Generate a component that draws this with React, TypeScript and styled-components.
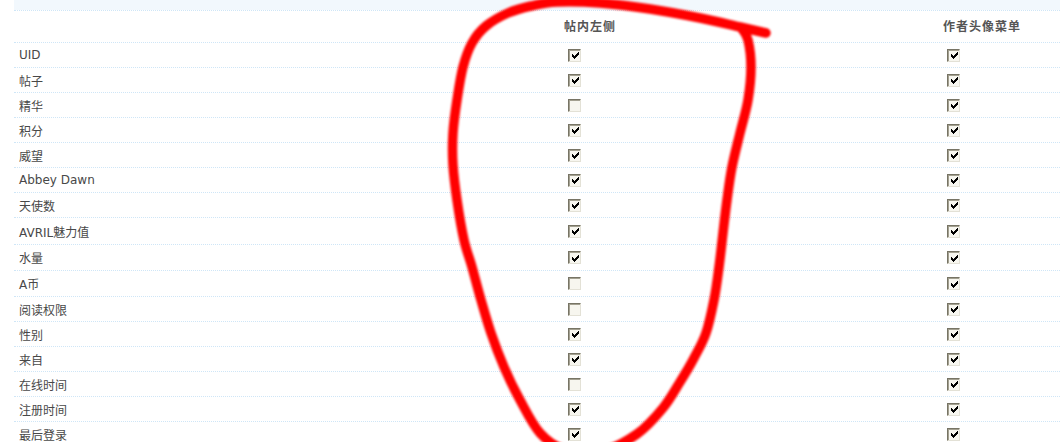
import React from "react";
import styled, { createGlobalStyle } from "styled-components";

type FieldRow = {
  label: string;
  side: boolean;
  menu: boolean;
  height?: number;
};

const fields: FieldRow[] = [
  { label: "UID", side: true, menu: true },
  { label: "帖子", side: true, menu: true },
  { label: "精华", side: false, menu: true },
  { label: "积分", side: true, menu: true },
  { label: "威望", side: true, menu: true },
  { label: "Abbey Dawn", side: true, menu: true },
  { label: "天使数", side: true, menu: true },
  { label: "AVRIL魅力值", side: true, menu: true, height: 27 },
  { label: "水量", side: true, menu: true, height: 26 },
  { label: "A币", side: false, menu: true, height: 26 },
  { label: "阅读权限", side: false, menu: true },
  { label: "性别", side: true, menu: true },
  { label: "来自", side: true, menu: true },
  { label: "在线时间", side: false, menu: true },
  { label: "注册时间", side: true, menu: true },
  { label: "最后登录", side: true, menu: true },
];

// the red marker loop drawn over the screenshot
const loop: [number, number][] = [
  [766, 33], [740, 27], [700, 18], [650, 9], [600, 3], [557, 2], [531, 6],
  [508, 13], [486, 26], [472, 43], [463, 67], [457, 100], [453, 133],
  [453, 165], [457, 200], [464, 240], [472, 267], [481, 300], [491, 333],
  [504, 367], [520, 400], [540, 433], [565, 450], [600, 452], [637, 434],
  [663, 408], [680, 382], [694, 358], [706, 333], [714, 300], [719, 267],
  [723, 233], [727, 200], [732, 167], [740, 133], [748, 100], [751, 67],
  [748, 40], [742, 29],
];

const smoothPath = (pts: [number, number][]) => {
  let d = `M${pts[0][0]} ${pts[0][1]}`;
  for (let i = 0; i < pts.length - 1; i++) {
    const p0 = pts[i - 1] || pts[i];
    const p1 = pts[i];
    const p2 = pts[i + 1];
    const p3 = pts[i + 2] || p2;
    const c1x = p1[0] + (p2[0] - p0[0]) / 6;
    const c1y = p1[1] + (p2[1] - p0[1]) / 6;
    const c2x = p2[0] - (p3[0] - p1[0]) / 6;
    const c2y = p2[1] - (p3[1] - p1[1]) / 6;
    d += ` C${c1x.toFixed(1)} ${c1y.toFixed(1)} ${c2x.toFixed(1)} ${c2y.toFixed(1)} ${p2[0]} ${p2[1]}`;
  }
  return d;
};

const loopPath = smoothPath(loop);

const CheckBox = ({ checked }: { checked: boolean }) => (
  <Box role="checkbox" aria-checked={checked}>
    {checked && (
      <svg width="7" height="7" viewBox="0 0 7 7" shapeRendering="crispEdges">
        <polygon points="0,2 2,4 7,0 7,3 2,7 0,5" fill="#000" />
      </svg>
    )}
  </Box>
);

const App: React.FC = () => {
  return (
    <Page>
      <GlobalStyle />
      <Table>
        <Band />
        <HeaderRow>
          <HeadCell />
          <HeadCell>帖内左侧</HeadCell>
          <HeadCell>作者头像菜单</HeadCell>
        </HeaderRow>
        {fields.map((f) => (
          <Row key={f.label} $height={f.height ?? 25}>
            <LabelCell>{f.label}</LabelCell>
            <Cell>
              <CheckBox checked={f.side} />
            </Cell>
            <Cell>
              <CheckBox checked={f.menu} />
            </Cell>
          </Row>
        ))}
      </Table>
      <Scribble width="1060" height="442" viewBox="0 0 1060 442">
        <defs>
          <filter id="soft" x="-5%" y="-5%" width="110%" height="110%">
            <feGaussianBlur stdDeviation="0.9" />
          </filter>
        </defs>
        <path
          d={loopPath}
          fill="none"
          stroke="#ff0000"
          strokeWidth="9.5"
          strokeLinecap="round"
          strokeLinejoin="round"
          filter="url(#soft)"
        />
      </Scribble>
    </Page>
  );
};

export default App;

const GlobalStyle = createGlobalStyle`
  html, body {
    margin: 0;
    padding: 0;
    background: #fff;
    overflow: hidden;
  }
  body {
    font-family: "DejaVu Sans", "Noto Sans CJK SC", sans-serif;
    font-size: 12px;
  }
`;

const Page = styled.div`
  position: relative;
  width: 1060px;
  height: 442px;
  overflow: hidden;
`;

const Table = styled.div`
  margin-left: 14px;
  display: flex;
  flex-direction: column;
`;

const Band = styled.div`
  height: 10px;
  background: #f2f8fd;
`;

const HeaderRow = styled.div`
  display: grid;
  grid-template-columns: 546px 379px 1fr;
  height: 32px;
  box-sizing: border-box;
  border-top: 1px dotted #cfe6f7;
`;

const HeadCell = styled.div`
  display: flex;
  align-items: center;
  padding: 0 4px 2px;
  font-family: "Noto Sans CJK SC", "DejaVu Sans", sans-serif;
  font-size: 12px;
  font-weight: 700;
  letter-spacing: 1px;
  color: #555;
`;

const Row = styled.div<{ $height: number }>`
  display: grid;
  grid-template-columns: 546px 379px 1fr;
  height: ${(p) => p.$height}px;
  box-sizing: border-box;
  border-top: 1px dotted #cfe6f7;
`;

const LabelCell = styled.div`
  display: flex;
  align-items: center;
  padding-left: 5px;
  font-family: "DejaVu Sans", "Noto Sans CJK SC", sans-serif;
  font-size: 12px;
  color: #484848;
  white-space: nowrap;
`;

const Cell = styled.div`
  display: flex;
  align-items: center;
  padding: 0 4px;
`;

const Box = styled.span`
  display: inline-flex;
  align-items: center;
  justify-content: center;
  width: 13px;
  height: 13px;
  box-sizing: border-box;
  margin: 0 3px 0 4px;
  border: 1px solid;
  border-color: #77746560 #e3e1d6 #e3e1d6 #777465;
  border-top-color: #777465;
  box-shadow: inset 1px 1px 0 #a3a090;
  background: #f7f6ef;
  padding: 1px 0 0 1px;
`;

const Scribble = styled.svg`
  position: absolute;
  top: 0;
  left: 0;
  pointer-events: none;
`;
